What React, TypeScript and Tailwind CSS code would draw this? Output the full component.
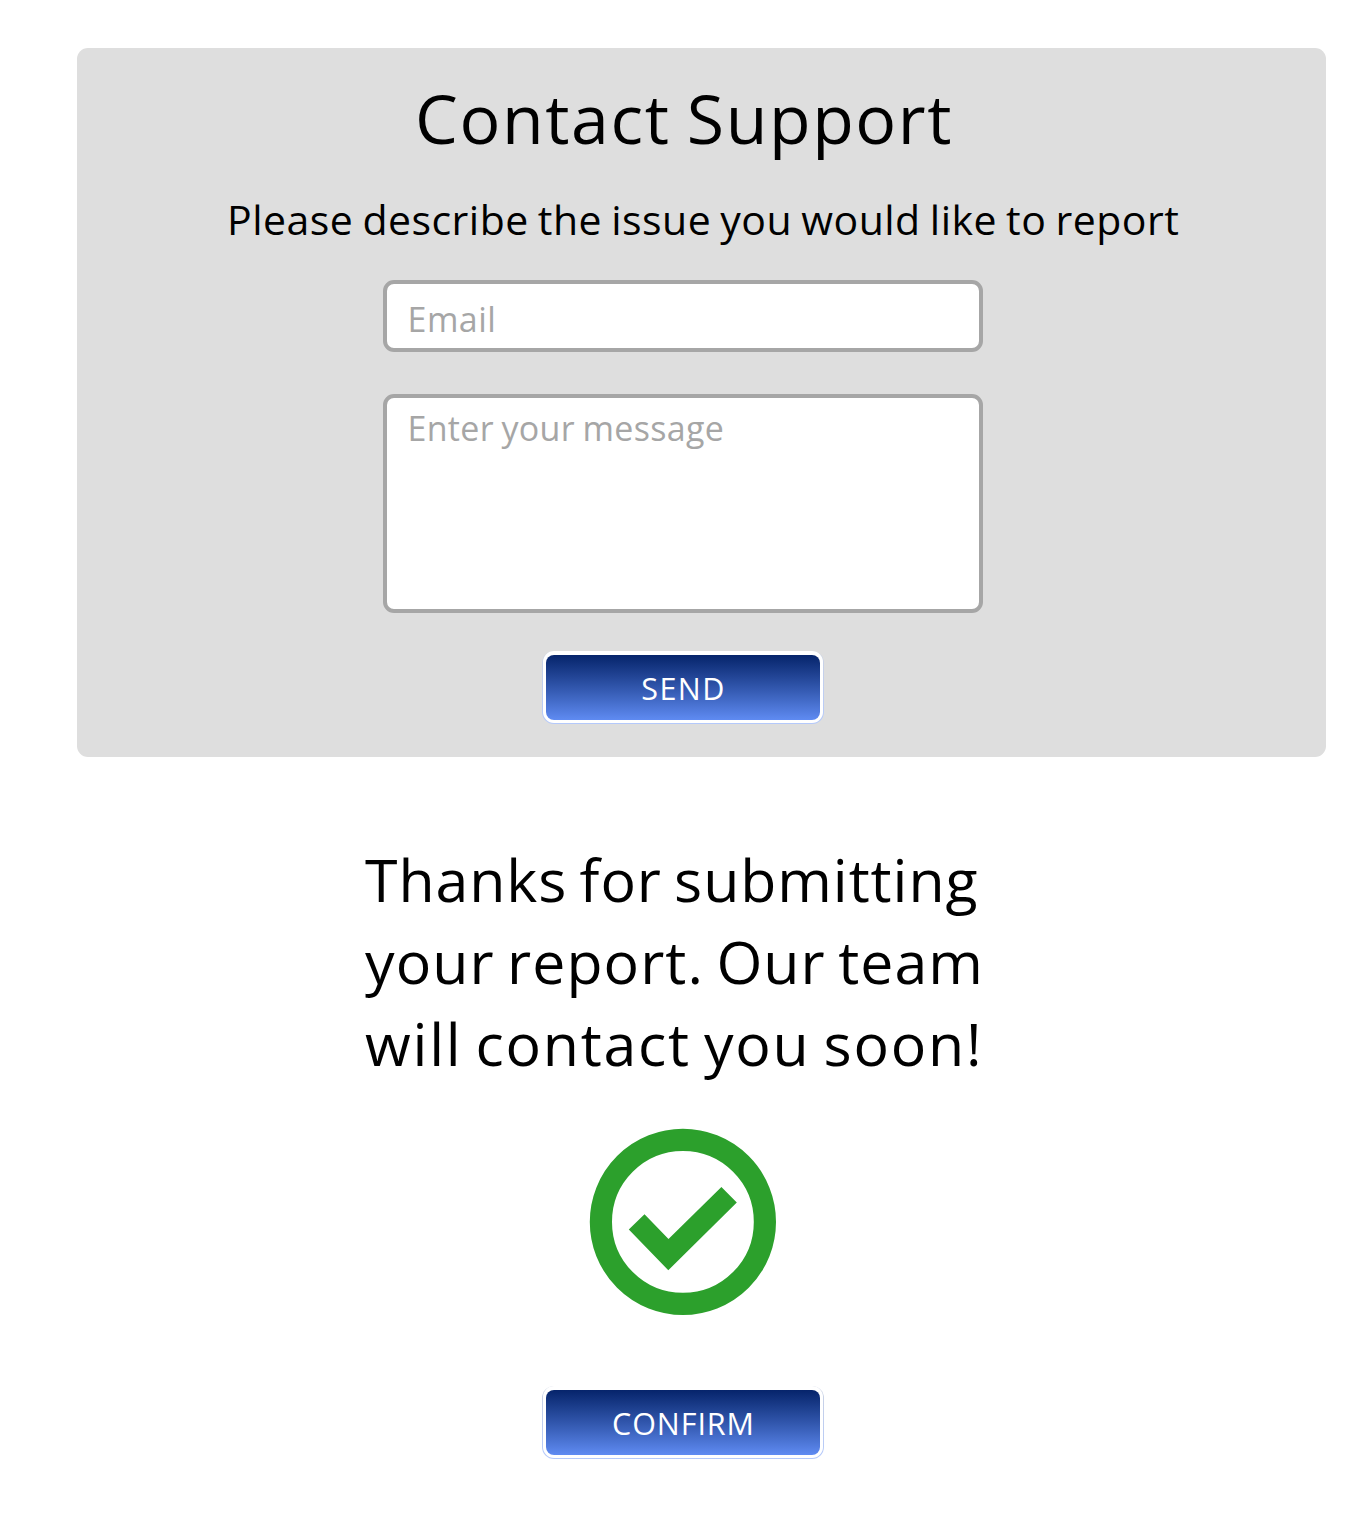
import type { ReactNode } from 'react';

function ActionButton({ children, className }: { children: ReactNode; className: string }) {
  return (
    <button
      type="button"
      className={`flex h-[73px] w-[282px] rounded-[12px] bg-linear-to-b from-[#ccd3e3] to-[#b4c9fb] px-px pb-px text-[30.5px] leading-[40px] text-white ${className}`}
    >
      <span className="flex h-full w-full rounded-[11px] bg-white px-[3px] pt-1 pb-[3px]">
        <span className="flex h-full w-full justify-center rounded-[8px] bg-linear-to-b from-[#06246b] to-[#5f8bf2] pt-[13px] pl-px">
          {children}
        </span>
      </span>
    </button>
  );
}

function SuccessIcon() {
  return (
    <svg className="mt-[44px] ml-[589px] block size-[188px]" viewBox="0 0 188 188" fill="none" aria-label="Success">
      <circle cx="93.9" cy="93.9" r="82" stroke="#2ca02c" strokeWidth="22.2" />
      <path d="M39.8 101.4 55.5 86.3 79.5 111 132.4 59.1 147.8 74.6 79.3 142.3Z" fill="#2ca02c" />
    </svg>
  );
}

export default function App() {
  return (
    <main className="flex h-[1536px] w-[1366px] flex-col items-start overflow-hidden bg-white pt-12 font-['Open_Sans',sans-serif] text-black">
      <section className="ml-[77px] flex h-[709px] w-[1249px] flex-col items-start rounded-[11px] bg-[#dedede] pt-[30px]">
        <h1 className="ml-[338px] text-[68px] leading-[80px] tracking-[1.6px] [word-spacing:-3px] whitespace-nowrap">
          Contact Support
        </h1>
        <p className="mt-[33px] ml-[150px] text-[41px] leading-[56px] tracking-[0.48px] [word-spacing:-2px] whitespace-nowrap">
          Please describe the issue you would like to report
        </p>
        <form className="mt-[33px] ml-[306px] flex w-[600px] flex-col items-start">
          <input
            type="email"
            placeholder="Email"
            className="h-[72px] w-full rounded-[11px] border-4 border-[#a6a6a6] bg-white pt-[5px] pl-[20.5px] text-[34px] tracking-[0.5px] placeholder:text-[#a6a6a6]"
          />
          <textarea
            placeholder="Enter your message"
            className="mt-[41.5px] block h-[219px] w-full resize-none rounded-[11px] border-4 border-[#a6a6a6] bg-white pt-[10.5px] pl-[20.5px] text-[34px] leading-[40px] tracking-[0.3px] [word-spacing:-1.5px] placeholder:text-[#a6a6a6]"
          />
          <ActionButton className="mt-[38.5px] ml-[159px] tracking-[1.4px]">SEND</ActionButton>
        </form>
      </section>

      <section className="flex flex-col items-start">
        <p className="mt-[81px] ml-[365px] flex flex-col text-[59px] leading-[82px] [word-spacing:-4px] whitespace-nowrap">
          <span className="tracking-[0.93px]">Thanks for submitting</span>
          <span className="tracking-[1.07px]">your report. Our team</span>
          <span className="tracking-[1.76px]">will contact you soon!</span>
        </p>
        <SuccessIcon />
        <ActionButton className="mt-[70px] ml-[542px] tracking-[0.93px]">CONFIRM</ActionButton>
      </section>
    </main>
  );
}
